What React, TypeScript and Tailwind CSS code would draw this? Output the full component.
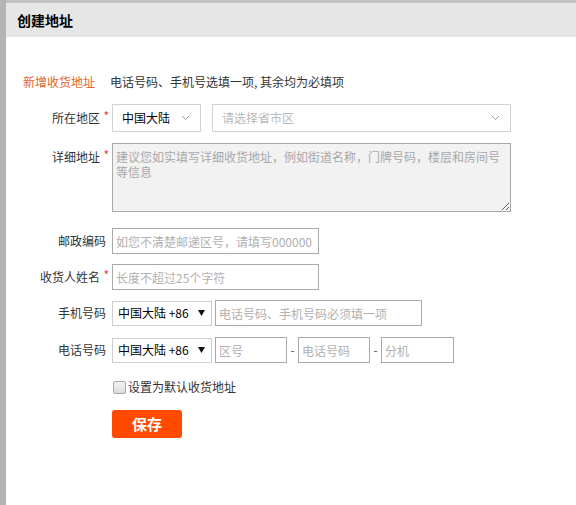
import React from "react"

const font = { fontFamily: '"Microsoft YaHei", "Noto Sans CJK SC", "Noto Sans", sans-serif' }

function Label({ text, required }: { text: string; required?: boolean }) {
  return (
    <div className={`w-[106px] shrink-0 text-right text-[12px] leading-[16px] text-[#333] ${required ? "pr-[3px]" : "pr-[6px]"}`}>
      {text}
      {required && <span className="inline-block w-[9px] text-right text-[12px] leading-[12px] align-top text-[#e4393c]">*</span>}
    </div>
  )
}

function Chevron() {
  return (
    <svg width="9" height="6" viewBox="0 0 9 6" className="shrink-0">
      <polyline points="1,1 4.5,4.5 8,1" fill="none" stroke="#9a9a9a" strokeWidth="1" />
    </svg>
  )
}

function TextInput({ placeholder, w }: { placeholder: string; w: string }) {
  return (
    <input
      placeholder={placeholder}
      className={`${w} h-[26px] shrink-0 border border-[#a9a9a9] px-[3px] text-[12px] text-[#333] placeholder:text-[#b0b0b0] outline-none`}
      style={font}
    />
  )
}

function CodeSelect() {
  return (
    <div className="w-[100px] h-[25px] shrink-0 flex items-center justify-between border border-[#cfcfcf] pl-[5px] pr-[6px] text-[12px] text-black">
      <span>中国大陆 +86</span>
      <svg width="7" height="6" viewBox="0 0 7 6" className="shrink-0">
        <polygon points="0,0 7,0 3.5,6" fill="#111" />
      </svg>
    </div>
  )
}

export default function App() {
  return (
    <div className="w-[576px] h-[505px] flex bg-white overflow-hidden" style={font}>
      <div className="w-[6px] shrink-0 bg-[#b4b4b4]" />
      <div className="flex-1 flex flex-col">
        <div className="h-[3px] bg-[#c2c2c2]" />
        <div className="h-[34px] flex items-center pl-[11px] bg-[#e6e6e6]">
          <h1 className="text-[14px] font-bold text-black">创建地址</h1>
        </div>

        {/* intro */}
        <div className="mt-[37px] pl-[17px] flex text-[12px] leading-[16px]">
          <span className="text-[#e3672a]">新增收货地址</span>
          <span className="ml-[15px] text-[#333]">电话号码、手机号选填一项, 其余均为必填项</span>
        </div>

        {/* region */}
        <div className="mt-[14px] flex items-center">
          <Label text="所在地区" required />
          <div className="w-[89px] h-[28px] flex items-center justify-between border border-[#d2d2d2] pl-[9px] pr-[10px] text-[12px] text-black">
            <span>中国大陆</span>
            <Chevron />
          </div>
          <div className="ml-[11px] w-[299px] h-[28px] flex items-center justify-between border border-[#d2d2d2] pl-[9px] pr-[10px] text-[12px] text-[#b8b8b8]">
            <span>请选择省市区</span>
            <Chevron />
          </div>
        </div>

        {/* detail */}
        <div className="mt-[11px] flex items-start">
          <div className="pt-[6px]">
            <Label text="详细地址" required />
          </div>
          <textarea
            placeholder="建议您如实填写详细收货地址，例如街道名称，门牌号码，楼层和房间号等信息"
            className="w-[399px] h-[69px] border border-[#a9a9a9] bg-[#f2f2f2] px-[3px] py-[5px] text-[12px] leading-[15px] placeholder:text-[#a8a8a8] outline-none"
            style={font}
          />
        </div>

        {/* postcode */}
        <div className="mt-[16px] flex items-center">
          <Label text="邮政编码" />
          <TextInput w="w-[207px]" placeholder="如您不清楚邮递区号，请填写000000" />
        </div>

        {/* name */}
        <div className="mt-[10px] flex items-center">
          <Label text="收货人姓名" required />
          <TextInput w="w-[207px]" placeholder="长度不超过25个字符" />
        </div>

        {/* mobile */}
        <div className="mt-[10px] flex items-center">
          <Label text="手机号码" />
          <CodeSelect />
          <div className="ml-[3px] flex">
            <TextInput w="w-[207px]" placeholder="电话号码、手机号码必须填一项" />
          </div>
        </div>

        {/* phone */}
        <div className="mt-[11px] flex items-center">
          <Label text="电话号码" />
          <CodeSelect />
          <div className="ml-[3px] flex items-center text-[12px] text-[#555]">
            <TextInput w="w-[72px]" placeholder="区号" />
            <span className="w-[11px] text-center">-</span>
            <TextInput w="w-[72px]" placeholder="电话号码" />
            <span className="w-[11px] text-center">-</span>
            <TextInput w="w-[73px]" placeholder="分机" />
          </div>
        </div>

        {/* default */}
        <div className="mt-[16px] flex items-center pl-[107px]">
          <span className="w-[13px] h-[13px] rounded-[2px] border border-[#a8a8a8] bg-gradient-to-b from-[#f4f4f4] to-[#dcdcdc]" />
          <span className="ml-[2px] text-[12px] leading-[16px] text-[#333]">设置为默认收货地址</span>
        </div>

        {/* save */}
        <div className="mt-[15px] pl-[106px]">
          <button className="w-[70px] h-[28px] rounded-[3px] bg-[#ff4a00] text-[15px] font-bold text-white">保存</button>
        </div>
      </div>
    </div>
  )
}
